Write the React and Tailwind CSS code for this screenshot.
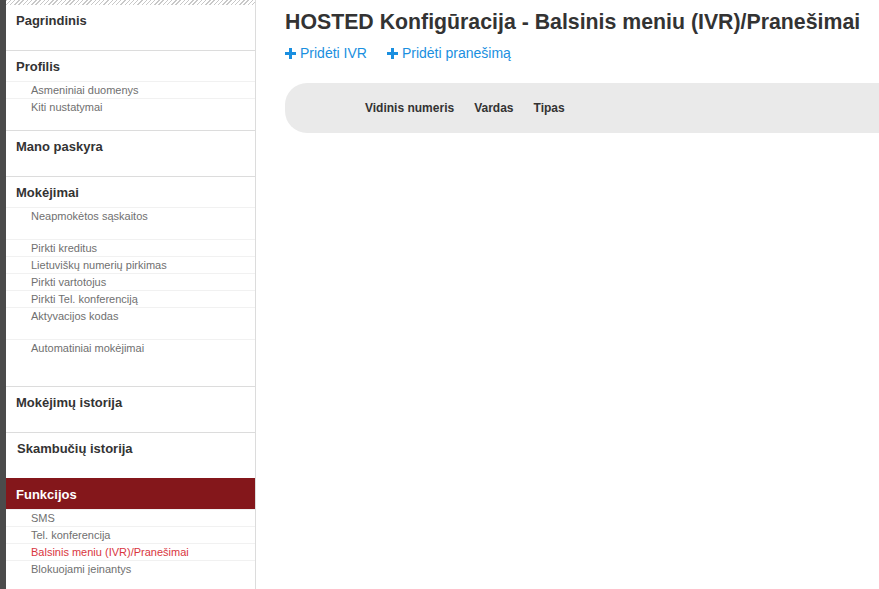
import React from "react";

function Title({ children, active }) {
  return (
    <div
      className={
        "pl-[10px] text-[13px] font-bold " +
        (active ? "bg-[#84171b] text-white h-[31px] leading-[33px]" : "text-[#333] h-[30px] leading-[32px]")
      }
    >
      {children}
    </div>
  );
}

function Item({ children, tall, active }) {
  return (
    <div
      className={
        "border-t border-[#f1f1f1] pl-[25px] text-[11px] leading-[16px] " +
        (tall ? "h-[32px] " : "h-[17px] ") +
        (active ? "text-[#d9363e]" : "text-[#707070]")
      }
    >
      {children}
    </div>
  );
}

function Section({ title, children, border = true }) {
  return (
    <div className={"pb-[15px] " + (border ? "border-b border-[#dcdcdc]" : "")}>
      <Title>{title}</Title>
      {children}
    </div>
  );
}

function Plus() {
  return (
    <svg width="11" height="11" viewBox="0 0 11 11" className="inline-block mr-[4px] -mt-[2px] align-middle">
      <rect x="4" y="0" width="3" height="11" fill="#1a8fe0" />
      <rect x="0" y="4" width="11" height="3" fill="#1a8fe0" />
    </svg>
  );
}

export default function App() {
  return (
    <div className="flex min-h-[589px] bg-white font-['Liberation_Sans',Arial,sans-serif]">
      <div className="w-[6px] shrink-0 bg-[#4b4b4b]" />
      <aside className="w-[250px] shrink-0 border-r border-[#dcdcdc]">
        <div className="h-[5px] bg-[repeating-linear-gradient(135deg,#c8c8c8_0px,#c8c8c8_1px,#ffffff_1px,#ffffff_3px)]" />
        <Section title="Pagrindinis" />
        <Section title="Profilis">
          <Item>Asmeniniai duomenys</Item>
          <Item>Kiti nustatymai</Item>
        </Section>
        <Section title="Mano paskyra" />
        <Section title="Mokėjimai">
          <Item tall>Neapmokėtos sąskaitos</Item>
          <Item>Pirkti kreditus</Item>
          <Item>Lietuviškų numerių pirkimas</Item>
          <Item>Pirkti vartotojus</Item>
          <Item>Pirkti Tel. konferenciją</Item>
          <Item tall>Aktyvacijos kodas</Item>
          <Item tall>Automatiniai mokėjimai</Item>
        </Section>
        <Section title="Mokėjimų istorija" />
        <Section title={<span className="pl-px">Skambučių istorija</span>} border={false} />
        <div>
          <Title active>Funkcijos</Title>
          <Item>SMS</Item>
          <Item>Tel. konferencija</Item>
          <Item active>Balsinis meniu (IVR)/Pranešimai</Item>
          <Item>Blokuojami įeinantys</Item>
        </div>
      </aside>
      <main className="flex-1 min-w-0 pl-[29px] pt-[10px]">
        <h1 className="text-[21.3px] leading-[24px] font-bold text-[#333] whitespace-nowrap">
          HOSTED Konfigūracija - Balsinis meniu (IVR)/Pranešimai
        </h1>
        <div className="mt-[10px] flex gap-[20px] text-[14px] leading-[18px] text-[#1a8fe0]">
          <span><Plus />Pridėti IVR</span>
          <span><Plus />Pridėti pranešimą</span>
        </div>
        <div className="mt-[21px] h-[50px] rounded-l-[22px] bg-[#eaeaea] flex items-center pl-[80px] gap-[20px] text-[12px] font-bold text-[#333]">
          <span>Vidinis numeris</span>
          <span>Vardas</span>
          <span>Tipas</span>
        </div>
      </main>
    </div>
  );
}
